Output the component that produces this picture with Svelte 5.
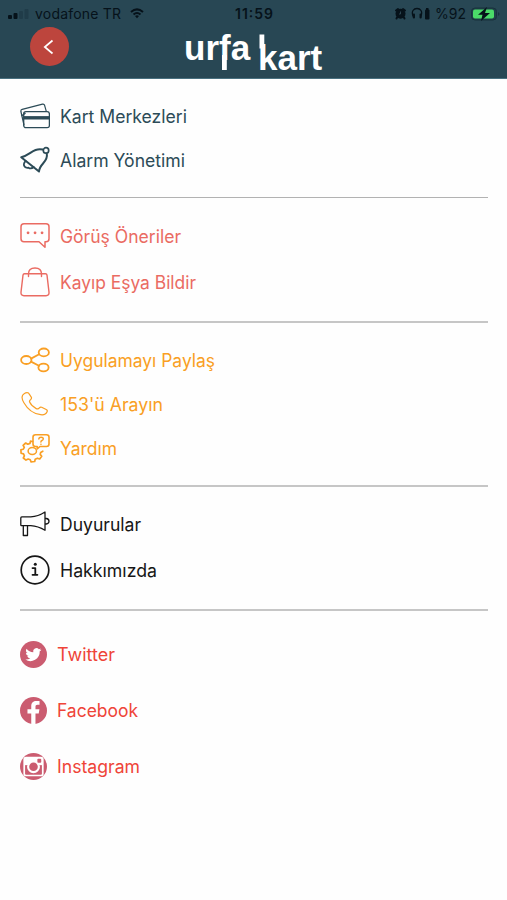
<script lang="ts">
  type Item = { icon: string; label: string; width: number };
  type Section = { name: string; items: Item[] };

  const sections: Section[] = [
    {
      name: 'cards',
      items: [
        { icon: 'card', label: 'Kart Merkezleri', width: 127 },
        { icon: 'bell', label: 'Alarm Yönetimi', width: 125 }
      ]
    },
    {
      name: 'feedback',
      items: [
        { icon: 'chat', label: 'Görüş Öneriler', width: 121 },
        { icon: 'bag', label: 'Kayıp Eşya Bildir', width: 136 }
      ]
    },
    {
      name: 'support',
      items: [
        { icon: 'share', label: 'Uygulamayı Paylaş', width: 155 },
        { icon: 'phone', label: "153'ü Arayın", width: 103 },
        { icon: 'help', label: 'Yardım', width: 57 }
      ]
    },
    {
      name: 'about',
      items: [
        { icon: 'megaphone', label: 'Duyurular', width: 81 },
        { icon: 'info', label: 'Hakkımızda', width: 97 }
      ]
    },
    {
      name: 'social',
      items: [
        { icon: 'twitter', label: 'Twitter', width: 58 },
        { icon: 'facebook', label: 'Facebook', width: 81 },
        { icon: 'instagram', label: 'Instagram', width: 83 }
      ]
    }
  ];
</script>

<div class="screen">
  <header>
    <div class="status">
      <div class="carrier">
        <svg width="23" height="12" viewBox="0 0 23 12">
          <rect x="0" y="7" width="4" height="4" rx="1" fill="#06121a" />
          <rect x="5.500" y="5" width="4" height="6" rx="1" fill="#06121a" />
          <rect x="11" y="3" width="4" height="8" rx="1" fill="#203c49" />
          <rect x="16.500" y="1" width="4" height="10" rx="1" fill="#203c49" />
        </svg>
        <svg class="carrier-name" width="88" height="18">
          <text x="0" y="14" textLength="86">vodafone TR</text>
        </svg>
        <svg class="wifi" width="14" height="11" viewBox="0 0 14 11" fill="none" stroke="#06121a" stroke-width="2">
          <path d="M1 4Q7-1.300 13 4M3.500 6.500q3.500-3 7 0" />
          <path d="M5 8q2-1.500 4 0l-2 2.300z" fill="#06121a" stroke="none" />
        </svg>
      </div>
      <svg class="clock" width="40" height="18">
        <text x="0" y="14" textLength="38">11:59</text>
      </svg>
      <div class="indicators">
        <svg width="13" height="13" viewBox="0 0 13 13">
          <circle cx="6.500" cy="6.800" r="5" fill="#06121a" />
          <path d="M2 3.500l2-1.500M11 3.500l-2-1.500M3 10.500l-.5 1M10 10.500l.5 1" stroke="#06121a" stroke-width="2" stroke-linecap="round" />
          <path d="M6.500 4.500v2.500H5" fill="none" stroke="#36515d" stroke-width=".8" />
        </svg>
        <svg width="20" height="13" viewBox="0 0 20 13">
          <path d="M2.500 10C-.5 4 3 1.500 6 1.500S12.500 4 9.500 10" fill="none" stroke="#06121a" stroke-width="1.300" />
          <rect x="1.800" y="6.500" width="2.200" height="5" rx="1" fill="#06121a" />
          <rect x="8.500" y="6.500" width="2.200" height="5" rx="1" fill="#06121a" />
          <rect x="14" y="2.500" width="4.500" height="10" rx="1" fill="#06121a" />
          <rect x="15" y="1" width="2.500" height="2" fill="#06121a" />
        </svg>
        <svg width="32" height="18">
          <text x="0" y="14" textLength="31">%92</text>
        </svg>
        <svg width="30" height="14" viewBox="0 0 30 14">
          <rect x=".5" y="1" width="25" height="12" rx="3.500" fill="#203f49" stroke="#18323d" />
          <rect x="2" y="2.500" width="21" height="9" rx="2" fill="#4bdb69" />
          <path d="M27 5v4q3-2 0-4" fill="#18323d" />
          <path d="M16 0L7 7.800h4.500L10 14l9-8h-5z" fill="#06121a" />
        </svg>
      </div>
    </div>
    <div class="nav">
      <button type="button" class="back" aria-label="Geri">
        <svg width="39" height="39" viewBox="0 0 39 39" fill="none" stroke="#fff" stroke-width="1.700">
          <path d="M22.500 13.500L14.800 20l7.700 6.500" />
        </svg>
      </button>
      <svg class="logo" width="141" height="51" viewBox="0 0 141 51" fill="#fff" role="img" aria-label="urfa kart">
        <!-- the f stem runs down and the k stem runs up past the letters -->
        <text x="1" y="33">urfa</text>
        <rect x="39" y="28" width="4.800" height="15" />
        <text x="75" y="43">kart</text>
        <rect x="76.500" y="7.500" width="4.800" height="14" />
      </svg>
    </div>
  </header>

  <main>
    {#each sections as section}
      <section class={section.name}>
        {#each section.items as item}
          <a class="item" href="#{item.icon}">
            <svg class="icon" viewBox="0 0 30 30" fill="none" stroke="currentColor" stroke-width="1.500" stroke-linejoin="round" stroke-linecap="round">
              {#if item.icon === 'card'}
                <path d="M4 24L.9 10.500q-.3-1.700 1.300-2.200L22.500 3.100q1.600-.4 2.100 1.200l1.700 6" stroke-width="1.200" />
                <rect x="3.700" y="10.700" width="25.700" height="16" rx="2.200" stroke-width="1.300" />
                <path d="M3.700 16.800h25.700" stroke-width="3.400" stroke-linecap="butt" />
                <path d="M2 14.500L5 12.500" stroke-width="1.500" />
              {:else if item.icon === 'bell'}
                <path d="M23 4.600C13 2.500 10 10.500 1.200 12.200L19 26.500C19.500 18.500 28.500 17 26.800 8.800" stroke-width="2" />
                <circle cx="26" cy="5.400" r="2.700" stroke-width="1.700" />
                <path d="M5.500 16c-3 3.500-1.500 7.500 3 6.700 2 1.300 4 .4 5.300-.7" stroke-width="1.800" />
              {:else if item.icon === 'chat'}
                <path d="M4 2.700h22q3 0 3 3v12q0 3-3 3h-1v5.500l-6-5.500H4q-3 0-3-3v-12q0-3 3-3z" />
                <path d="M8 11.800h.1M15 11.800h.1M22 11.800h.1" stroke-width="2.700" />
              {:else if item.icon === 'bag'}
                <path d="M4.500 6.800h21q1.300 0 1.500 1.400l2 17q.3 3.500-3 3.500H4q-3.300 0-3-3.500l2-17q.2-1.400 1.500-1.400zM8.500 9.500V7q0-6 6.500-6t6.500 6v2.500" stroke-width="1.400" />
              {:else if item.icon === 'share'}
                <ellipse cx="6.300" cy="15" rx="5.200" ry="4" stroke-width="1.800" />
                <ellipse cx="23.800" cy="7.400" rx="5.100" ry="3.900" stroke-width="1.800" />
                <ellipse cx="23.500" cy="22.500" rx="5.100" ry="3.900" stroke-width="1.800" />
                <path d="M11 13.600L19.200 9.300M11 16.600l8 4.200" stroke-width="1.800" />
              {:else if item.icon === 'phone'}
                <path d="M4.100 4.700C1.300 6.500 2 10.500 3.900 13.700 7.500 20 13.800 24.800 20.700 25.700c3.300.5 5.500-.9 6.500-3.300.4-1-.2-1.500-1-1.900l-4.500-2.200c-.9-.4-1.700-.2-2.300.6-.8 1.100-1.900 1.400-3.200.7-3-1.600-5.400-3.800-6.600-6.500-.4-1.300.1-2 1.100-2.700.8-.6 1-1.200.7-2.100L9.300 5.200C8.500 3 6 3.400 4.100 4.700z" stroke-width="1.200" />
              {:else if item.icon === 'help'}
                <path d="M12.500 8.500l-2-.3-.5 2.200-2.200.8-2.100-1.200-2.600 2.300 1.200 2.100-1 1.800-2.400.6.200 3.500 2.400.6.900 2-1.100 2.100 2.700 2.100 2.200-1.100 2 .7.900 2.200 3.600-.4.500-2.200 2.200-1.100 2.300.8 2-2.700-1.500-1.900.5-2 2.100-1.200" stroke-width="1.700" />
                <ellipse cx="12.300" cy="18" rx="4.200" ry="3.500" stroke-width="1.500" />
                <path d="M15.500 1.800h11q2.500 0 2.500 2.500V11q0 2.500-2.500 2.500H20l-2.800 2.300v-2.300h-1.700Q13 13.500 13 11V4.300q0-2.500 2.500-2.500z" stroke-width="1.600" />
                <path d="M18.800 5.900q.2-1.700 2.300-1.700c3 0 2.600 2.600.9 3.300q-1 .4-1.100 1.500M20.900 11.300h.1" stroke-width="1.500" />
              {:else if item.icon === 'megaphone'}
                <path d="M1.800 7.900h9Q18 7.500 25 3v18.300q-7-4.200-14.200-4.600h-9Q.8 16.700.8 15.700V8.900q0-1 1-1zM25 9.500h1.200q2.800.3 2.800 2.700t-2.800 2.800H25M3.300 17v9.500h4.200V17" stroke-width="1.300" />
              {:else if item.icon === 'info'}
                <circle cx="15" cy="15" r="13.800" stroke-width="1.700" />
                <path d="M12.500 13.100h2.800v6.500M12.500 19.800h4.900" stroke-width="1.800" />
                <circle cx="15.300" cy="9.300" r="1.500" fill="currentColor" stroke="none" />
              {:else if item.icon === 'twitter'}
                <circle class="disc" cx="15" cy="15" r="15" />
                <path transform="translate(6 6.200) scale(.74)" d="M24 4.600a10 10 0 0 1-2.800.8 5 5 0 0 0 2.100-2.700 10 10 0 0 1-3.100 1.200 4.900 4.900 0 0 0-8.400 4.500A14 14 0 0 1 1.700 3.200 4.900 4.900 0 0 0 3.200 9.700a5 5 0 0 1-2.200-.6 4.900 4.900 0 0 0 3.900 4.900 5 5 0 0 1-2.200.1 4.900 4.900 0 0 0 4.600 3.400A10 10 0 0 1 0 19.500a14 14 0 0 0 21.500-12.400A10 10 0 0 0 24 4.600z" fill="#fff" stroke="none" />
              {:else if item.icon === 'facebook'}
                <circle class="disc" cx="15" cy="15" r="15" />
                <path d="M12.500 30V18.300H8.300v-4.700h4.200v-3.500c0-4 2.300-5.700 5.600-5.700h3.600v4.200h-2.200c-1.800 0-2.300.9-2.300 2.300v2.700h4.400l-.8 4.700h-3.600V30z" fill="#fff" stroke="none" />
              {:else}
                <circle class="disc" cx="15" cy="15" r="15" />
                <rect x="4.700" y="5" width="20.600" height="20" rx="2" stroke="#fff" stroke-width="1.900" />
                <path d="M5 5h20v8.500H5z" fill="#fff" stroke="none" />
                <circle cx="15" cy="15.300" r="6" fill="#cb5c70" stroke="#fff" stroke-width="2.400" />
                <rect x="19.300" y="6.500" width="4.300" height="4.300" rx="1" fill="#cb5c70" stroke="none" />
              {/if}
            </svg>
            <svg class="label" width={item.width + 4} height="26">
              <text x="0" y="19.600" textLength={item.width} lengthAdjust="spacingAndGlyphs">{item.label}</text>
            </svg>
          </a>
        {/each}
      </section>
    {/each}
  </main>
</div>

<style>
  :global(body) {
    background: #fefefe;
  }

  .screen {
    min-height: 900px;
    background: #fefefe;
    font-family: Inter, 'Liberation Sans', sans-serif;
  }

  svg {
    display: block;
    flex-shrink: 0;
  }

  header {
    box-sizing: border-box;
    height: 79px;
    background: #284754;
    border-bottom: 1px solid #49707f;
  }

  .status {
    display: grid;
    grid-template-columns: 1fr auto 1fr;
    align-items: center;
    height: 27px;
    padding: 0 6px 0 8px;
    font-size: 14px;
  }

  .status text {
    fill: #06121a;
  }

  .carrier,
  .indicators {
    display: flex;
    align-items: center;
  }

  .carrier {
    gap: 4px;
  }

  .wifi {
    margin-left: 3px;
  }

  .indicators {
    justify-content: flex-end;
    gap: 4px;
  }

  .clock {
    font-weight: 600;
  }

  .nav {
    display: grid;
    grid-template-columns: 1fr auto 1fr;
    height: 51px;
    padding: 0 30px;
  }

  .back {
    width: 39px;
    height: 39px;
    padding: 0;
    border: none;
    border-radius: 50%;
    background: #bd453d;
    cursor: pointer;
  }

  .logo {
    font: bold 35px 'Liberation Sans', Arial, sans-serif;
  }

  section {
    display: flex;
    flex-direction: column;
    margin: 0 19px 0 20px;
    border-bottom: 2px solid #c6c6c6;
    font-size: 18px;
  }

  .item {
    display: flex;
    align-items: center;
    gap: 10px;
    height: 44px;
    color: inherit;
    text-decoration: none;
  }

  .icon {
    width: 30px;
    height: 30px;
  }

  .label text {
    fill: currentColor;
  }

  .cards {
    padding: 15px 0;
    border-bottom: 1px solid #b2b2b2;
    color: #2c4b57;
  }

  .feedback {
    padding: 15px 0 16px;
    color: #ea6b62;
  }

  .support {
    padding: 15px 0;
    color: #f99f24;
  }

  .about {
    padding: 14px 0 16px;
    color: #161616;
  }

  .feedback .item,
  .about .item {
    height: 46px;
  }

  .social {
    padding-top: 15px;
    border-bottom: none;
    color: #ef4438;
  }

  .social .item {
    height: 56px;
  }

  .social .icon {
    width: 27px;
    height: 27px;
  }

  .disc {
    fill: #cb5c70;
    stroke: none;
  }
</style>
